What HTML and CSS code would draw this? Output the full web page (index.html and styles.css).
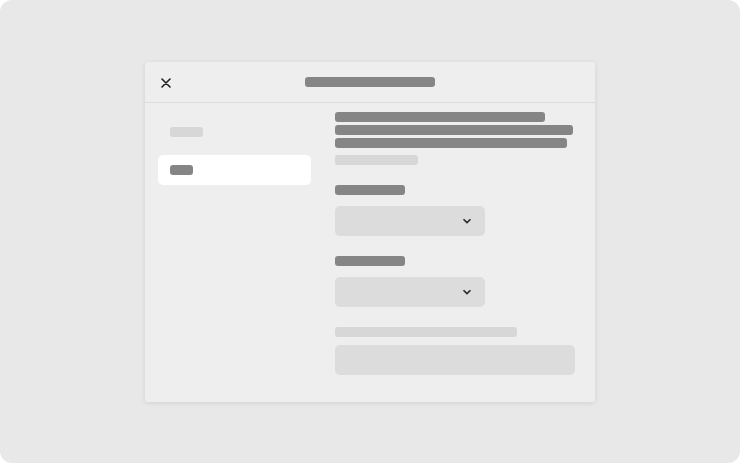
FILE: index.html
```html
<!DOCTYPE html>
<html lang="en">
<head>
    <meta charset="UTF-8">
    <meta name="viewport" content="width=device-width, initial-scale=1.0">
    <title>Settings</title>
    <link rel="stylesheet" href="styles.css">
</head>
<body>
    <div class="frame">
        <div class="dialog">
            <div class="dialogHeader">
                <button class="closeBtn" aria-label="Close">
                    <svg width="10" height="10" viewBox="0 0 10 10">
                        <path d="M1 1 L9 9 M9 1 L1 9" stroke="#1f1f1f" stroke-width="1.6" stroke-linecap="round" fill="none"/>
                    </svg>
                </button>
                <div class="bar dark titleBar"></div>
            </div>
            <div class="dialogBody">
                <ul class="sideNav">
                    <li class="navItem"><div class="bar light" style="width: 33px"></div></li>
                    <li class="navItem active"><div class="bar dark" style="width: 23px"></div></li>
                </ul>
                <div class="content">
                    <div class="intro">
                        <div class="bar dark" style="width: 210px"></div>
                        <div class="bar dark" style="width: 238px"></div>
                        <div class="bar dark" style="width: 232px"></div>
                        <div class="bar light hint" style="width: 83px"></div>
                    </div>
                    <div class="field">
                        <div class="bar dark" style="width: 70px"></div>
                        <div class="select">
                            <svg width="10" height="6" viewBox="0 0 10 6">
                                <path d="M1.5 1.2 L5 4.6 L8.5 1.2" stroke="#2a2a2a" stroke-width="1.6" fill="none"/>
                            </svg>
                        </div>
                    </div>
                    <div class="field">
                        <div class="bar dark" style="width: 70px"></div>
                        <div class="select">
                            <svg width="10" height="6" viewBox="0 0 10 6">
                                <path d="M1.5 1.2 L5 4.6 L8.5 1.2" stroke="#2a2a2a" stroke-width="1.6" fill="none"/>
                            </svg>
                        </div>
                    </div>
                    <div class="field tight">
                        <div class="bar light" style="width: 182px"></div>
                        <div class="textInput"></div>
                    </div>
                </div>
            </div>
        </div>
    </div>
</body>
</html>
```

FILE: styles.css
```css
body {
    margin: 0;
    background-color: #ffffff;
    font-family: "Liberation Sans", Arial, sans-serif;
}
.frame {
    width: 740px;
    height: 463px;
    background-color: #e8e8e8;
    border-radius: 12px;
    display: flex;
    justify-content: center;
    align-items: center;
}
.dialog {
    width: 450px;
    height: 340px;
    background-color: #eeeeee;
    border-radius: 3px;
    box-shadow: 0 1px 5px rgba(0, 0, 0, 0.1);
    display: flex;
    flex-direction: column;
}
.dialogHeader {
    position: relative;
    height: 40px;
    border-bottom: 1px solid #dcdcdc;
    display: flex;
    align-items: center;
    justify-content: center;
}
.closeBtn {
    position: absolute;
    left: 16px;
    top: 16px;
    width: 10px;
    height: 10px;
    padding: 0;
    border: none;
    background: none;
    display: flex;
}
.bar {
    height: 10px;
    border-radius: 3px;
}
.dark {
    background-color: #858585;
}
.light {
    background-color: #d7d7d7;
}
.titleBar {
    width: 130px;
}
.dialogBody {
    display: flex;
    gap: 24px;
    padding: 0 20px 0 13px;
}
.sideNav {
    list-style-type: none;
    margin: 0;
    padding: 14px 0 0;
    width: 153px;
    display: flex;
    flex-direction: column;
    gap: 8px;
}
.navItem {
    height: 30px;
    padding: 0 12px;
    border-radius: 5px;
    display: flex;
    align-items: center;
}
.navItem.active {
    background-color: #ffffff;
}
.content {
    flex: 1;
    padding-top: 9px;
    display: flex;
    flex-direction: column;
    gap: 20px;
}
.intro {
    display: flex;
    flex-direction: column;
    gap: 3px;
}
.intro .hint {
    margin-top: 4px;
}
.field {
    display: flex;
    flex-direction: column;
    gap: 11px;
}
.field.tight {
    gap: 8px;
}
.select {
    width: 150px;
    height: 30px;
    box-sizing: border-box;
    background-color: #dcdcdc;
    border-radius: 5px;
    display: flex;
    align-items: center;
    justify-content: flex-end;
    padding-right: 13px;
}
.textInput {
    height: 30px;
    background-color: #dcdcdc;
    border-radius: 5px;
}
```
